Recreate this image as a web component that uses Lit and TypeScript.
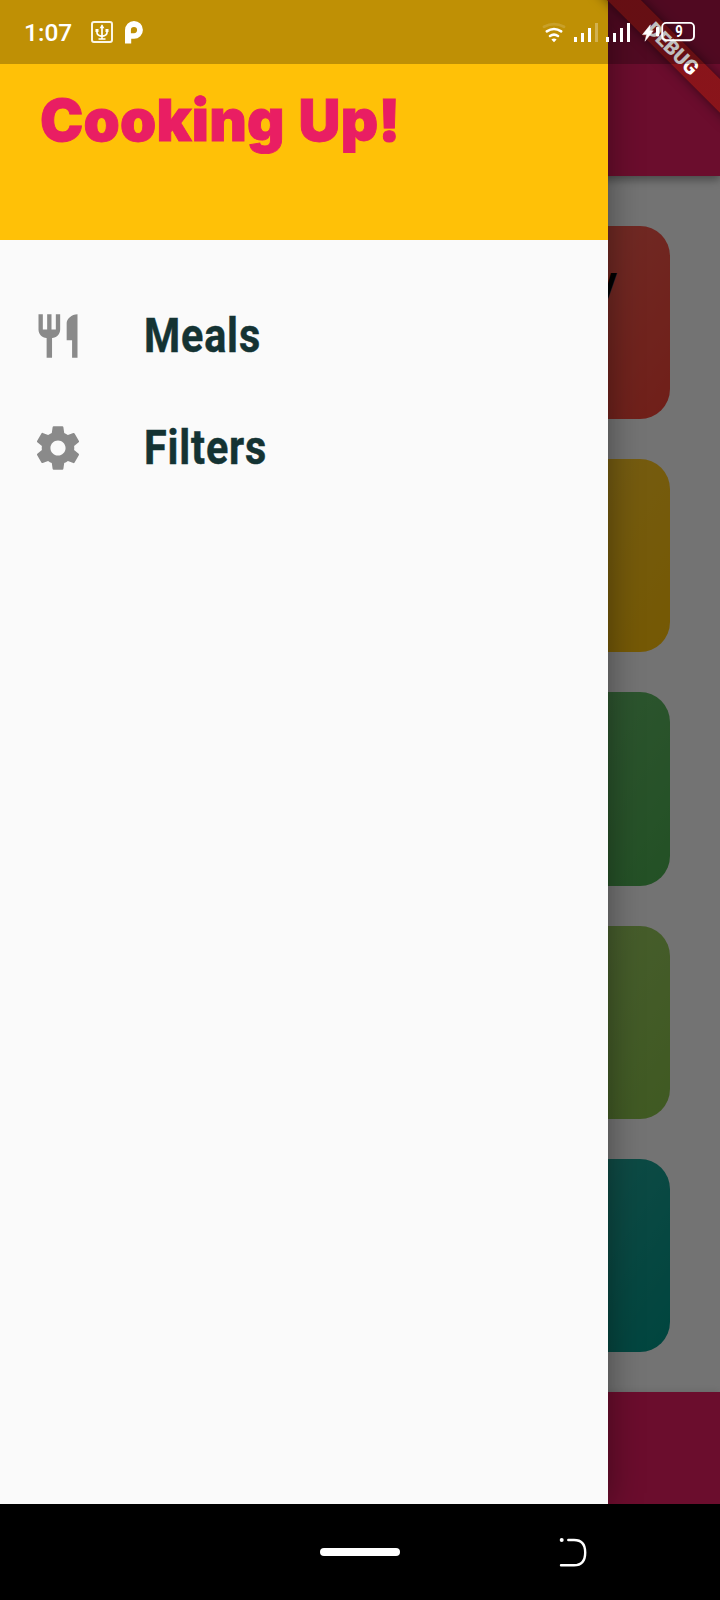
import { LitElement, html, css, svg } from "lit";
import { customElement } from "lit/decorators.js";

const MEALS_ICON = svg`<path d="M11 9H9V2H7v7H5V2H3v7c0 2.12 1.66 3.84 3.75 3.97V22h2.5v-9.03C11.34 12.84 13 11.12 13 9V2h-2v7zm5-3v8h2.5v8H21V2c-2.76 0-5 2.24-5 4z"/>`;
const FILTERS_ICON = svg`<path d="M19.43 12.98c.04-.32.07-.64.07-.98s-.03-.66-.07-.98l2.11-1.65c.19-.15.24-.42.12-.64l-2-3.46c-.12-.22-.39-.3-.61-.22l-2.49 1c-.52-.4-1.08-.73-1.69-.98l-.38-2.65C14.46 2.18 14.25 2 14 2h-4c-.25 0-.46.18-.49.42l-.38 2.65c-.61.25-1.17.59-1.69.98l-2.49-1c-.23-.09-.49 0-.61.22l-2 3.46c-.13.22-.07.49.12.64l2.11 1.65c-.04.32-.07.65-.07.98s.03.66.07.98l-2.11 1.65c-.19.15-.24.42-.12.64l2 3.46c.12.22.39.3.61.22l2.49-1c.52.4 1.08.73 1.69.98l.38 2.65c.03.24.24.42.49.42h4c.25 0 .46-.18.49-.42l.38-2.65c.61-.25 1.17-.59 1.69-.98l2.49 1c.23.09.49 0 .61-.22l2-3.46c.12-.22.07-.49-.12-.64l-2.11-1.65zM12 15.5c-1.93 0-3.5-1.57-3.5-3.5s1.57-3.5 3.5-3.5 3.5 1.57 3.5 3.5-1.57 3.5-3.5 3.5z"/>`;

@customElement("status-bar")
class StatusBar extends LitElement {
  static styles = css`
    :host {
      display: flex;
      justify-content: space-between;
      height: 64px;
      background: rgba(0, 0, 0, 0.25);
      color: #fff;
      font-family: Roboto, sans-serif;
    }
    .left {
      display: flex;
      align-items: center;
      padding-left: 24px;
    }
    .time {
      width: 64px;
      font-size: 24.5px;
      font-weight: 500;
      line-height: 64px;
      padding-top: 1px;
    }
    svg {
      display: block;
    }
    .level {
      font: 700 16px Roboto, sans-serif;
    }
  `;
  render() {
    return html`
      <div class="left">
        <div class="time">1:07</div>
        <svg width="60" height="64" viewBox="88 0 60 64" fill="none" stroke="#fff">
          <rect x="92" y="22" width="20" height="20" rx="2" stroke-width="2" stroke="#fbf6e6" />
          <path d="M102 25.5V38.5M97 31v1.5q0 3 5 3.8q5-.8 5-3.8V31M98.5 39h7" stroke-width="1.7" />
          <path d="M99.6 28.2L102 24.3l2.4 3.9zM95.5 29h3v3h-3zM105.5 29h3v3h-3z" fill="#fff" stroke="none" />
          <path d="M125 43.6V30.2A9 9 0 0 1 134 21a8.9 8.9 0 0 1 0 17.8h-2.8v4.8zM134 27a3.1 3.1 0 0 0-3.1 3.2v3h3.1a3.1 3.1 0 0 0 0-6.2z" fill="#fff" stroke="none" fill-rule="evenodd" />
        </svg>
      </div>
      <svg width="184" height="64" viewBox="536 0 184 64" fill="#fff">
        <g fill="none" stroke="#fff" stroke-width="2.6" stroke-linecap="round">
          <path d="M544 26.8Q554 21.6 564 26.8" opacity="0.15" stroke-width="2.8" />
          <path d="M546.8 31.4Q554 26.6 561.2 31.4" />
          <path d="M550 36Q554 33.2 558 36" />
        </g>
        <path d="M551.4 39.6Q554 37.6 556.6 39.6L554 42.2z" />
        <g>
          <rect x="574" y="37" width="3" height="5" />
          <rect x="581" y="33" width="3" height="9" />
          <rect x="588" y="28" width="3" height="14" />
          <rect x="595" y="23" width="3" height="19" opacity="0.3" />
          <rect x="606" y="37" width="3" height="5" />
          <rect x="613" y="33" width="3" height="9" />
          <rect x="620" y="28" width="3" height="14" />
          <rect x="627" y="23" width="3" height="19" />
        </g>
        <path d="M650.4 24.8L642.5 34.6H646.6L645 41.2L653.3 30.8H649.4z" stroke="#fff" stroke-width=".5" />
        <rect x="656" y="27" width="3.2" height="9.4" rx=".8" />
        <rect x="662.2" y="22.9" width="31.8" height="17.4" rx="4" fill="none" stroke="#fff" stroke-width="1.9" />
        <text class="level" x="679" y="37" text-anchor="middle" textLength="7.5" lengthAdjust="spacingAndGlyphs">9</text>
      </svg>
    `;
  }
}

@customElement("meals-page")
class MealsPage extends LitElement {
  static styles = css`
    :host {
      display: grid;
      grid-template-rows: 176px 1216px 112px;
      background: #fafafa;
      overflow: hidden;
      font-family: Roboto, sans-serif;
    }
    .bar {
      background: #e91e63;
      z-index: 1;
    }
    .top {
      box-shadow: 0 4px 8px rgba(0, 0, 0, 0.35);
    }
    .bottom {
      box-shadow: 0 -1px 6px rgba(0, 0, 0, 0.1);
    }
    .grid {
      display: grid;
      justify-content: end;
      align-content: start;
      grid-template-columns: 290px;
      grid-auto-rows: 193.2px;
      gap: 40px;
      padding: 50px;
    }
    .card {
      box-sizing: border-box;
      border-radius: 30px;
      padding: 28px 53px;
      text-align: right;
      font-size: 40px;
      line-height: 56px;
      font-weight: 700;
      color: #000;
    }
    .red { background: linear-gradient(123.7deg, #f44336b3, #f44336); }
    .amber { background: linear-gradient(123.7deg, #ffc107b3, #ffc107); }
    .green { background: linear-gradient(123.7deg, #4caf50b3, #4caf50); }
    .lime { background: linear-gradient(123.7deg, #8bc34ab3, #8bc34a); }
    .teal { background: linear-gradient(123.7deg, #009688b3, #009688); }
  `;
  render() {
    return html`
      <div class="bar top"></div>
      <div class="grid">
        <div class="card red">y</div>
        <div class="card amber"></div>
        <div class="card green"></div>
        <div class="card lime"></div>
        <div class="card teal"></div>
      </div>
      <div class="bar bottom"></div>
    `;
  }
}

@customElement("main-drawer")
class MainDrawer extends LitElement {
  static styles = css`
    :host {
      display: block;
      width: 608px;
      background: #fafafa;
      box-shadow: 0 0 32px rgba(0, 0, 0, 0.4);
      font-family: Roboto, sans-serif;
    }
    .header {
      box-sizing: border-box;
      height: 240px;
      margin-bottom: 40px;
      padding: 84px 40px 0;
      background: #ffc107;
      color: #e91e63;
      font: 900 58px/72px Inter, sans-serif;
      white-space: nowrap;
    }
    .title, .label {
      display: inline-block;
      transform-origin: 0 50%;
    }
    .title {
      letter-spacing: 0.2px;
      word-spacing: 2px;
      -webkit-text-stroke: 0.9px #e91e63;
    }
    .tile {
      display: flex;
      align-items: center;
      gap: 60px;
      height: 112px;
      padding-left: 32px;
      color: #143333;
      font-size: 48px;
      font-weight: 700;
    }
    .label {
      padding-bottom: 2px;
      letter-spacing: 1px;
      transform: scaleX(0.86);
      -webkit-text-stroke: 0.5px #143333;
    }
    svg {
      width: 52px;
      height: 52px;
      fill: #8a8a8a;
    }
  `;
  render() {
    return html`
      <div class="header"><span class="title">Cooking Up!</span></div>
      <div class="tile"><svg viewBox="0 0 24 24">${MEALS_ICON}</svg><span class="label">Meals</span></div>
      <div class="tile"><svg viewBox="0 0 24 24">${FILTERS_ICON}</svg><span class="label">Filters</span></div>
    `;
  }
}

@customElement("app-root")
class AppRoot extends LitElement {
  static styles = css`
    :host {
      display: block;
      width: 720px;
      height: 1600px;
      background: #000;
      overflow: hidden;
    }
    .screen {
      display: grid;
      grid-template: 1504px / 720px;
      position: relative;
      overflow: hidden;
    }
    .screen > * {
      grid-area: 1 / 1;
    }
    .scrim {
      background: rgba(0, 0, 0, 0.54);
      z-index: 1;
    }
    .drawer {
      z-index: 2;
    }
    .banner {
      position: absolute;
      right: -48px;
      top: 35.5px;
      width: 192px;
      height: 24px;
      transform: rotate(45deg);
      background: linear-gradient(rgba(183, 28, 28, 0.63) 0 0), rgba(0, 0, 0, 0.45);
      box-shadow: 0 0 12px rgba(0, 0, 0, 0.5);
      color: #fff;
      font: 900 20.2px/25px Roboto, sans-serif;
      text-align: center;
      text-indent: 2px;
    }
    .clip {
      z-index: 3;
      position: relative;
      overflow: hidden;
      pointer-events: none;
    }
    .status {
      z-index: 4;
      align-self: start;
    }
    .nav {
      display: grid;
      grid-template-columns: 1fr 80px 1fr;
      align-items: center;
      height: 96px;
    }
    .home {
      height: 8px;
      border-radius: 4px;
      background: #fff;
    }
    .back {
      display: block;
      margin-left: 156px;
    }
  `;
  render() {
    return html`
      <div class="screen">
        <meals-page></meals-page>
        <div class="scrim"></div>
        <main-drawer class="drawer"></main-drawer>
        <div class="clip"><div class="banner">DEBUG</div></div>
        <status-bar class="status"></status-bar>
      </div>
      <div class="nav">
        <span></span>
        <div class="home"></div>
        <svg class="back" width="36" height="36" viewBox="556 1534 36 36" fill="none" stroke="#fff" stroke-width="2.4" stroke-linecap="round">
          <circle cx="561.7" cy="1540" r="2" fill="#fff" stroke="none" />
          <path d="M568.3 1540H574Q585.2 1540 585.2 1552.5Q585.2 1565.3 574 1565.3H561" />
        </svg>
      </div>
    `;
  }
}
